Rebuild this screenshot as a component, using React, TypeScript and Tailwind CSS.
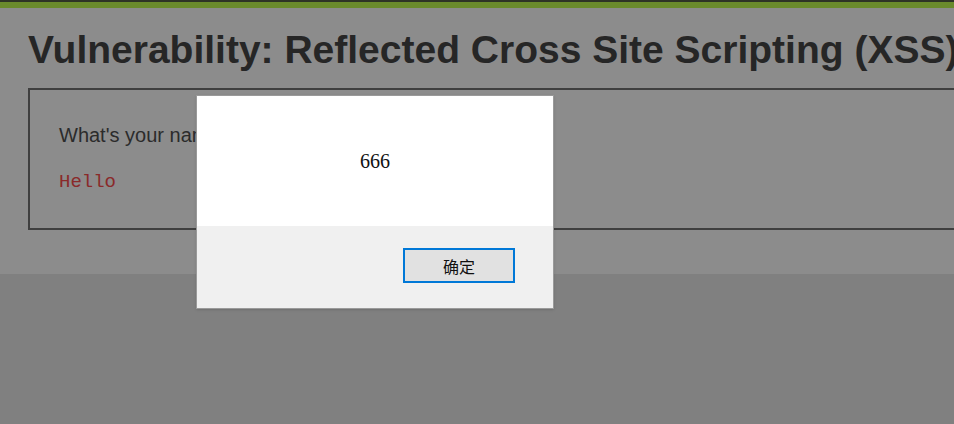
import React from "react";

const App = () => {
  return (
    <div className="relative w-[954px] h-[424px] overflow-hidden bg-[#808080] font-['Liberation_Sans',Arial,sans-serif]">
      <div className="h-[2px] bg-[#2e3326]" />
      <div className="h-[6px] bg-[#6a8a2c]" />
      <div className="bg-[#8c8c8c] h-[266px] pl-[28px] pt-[20px]">
        <h1 className="text-[39px] leading-[44px] font-bold text-[#262626] whitespace-nowrap">
          Vulnerability: Reflected Cross Site Scripting (XSS)
        </h1>
        <div className="mt-[16px] w-[1000px] h-[142px] border-2 border-[#3f3f3f] border-r-0 pl-[29px] pt-[33px]">
          <p className="text-[20px] leading-[24px] text-[#2b2b2b]">What's your name?</p>
          <pre className="mt-[23px] text-[19px] leading-[24px] text-[#8a2a2a] font-['Liberation_Mono','Courier_New',monospace]">Hello</pre>
        </div>
      </div>

      <div className="absolute left-[196px] top-[95px] w-[358px] h-[214px] flex flex-col border border-[#9a9a9a] shadow-sm">
        <div className="h-[130px] bg-white flex items-center justify-center">
          <span className="text-[20px] text-[#111] font-['Liberation_Serif',serif]">666</span>
        </div>
        <div className="flex-1 bg-[#f0f0f0] flex justify-end items-start pt-[22px] pr-[38px]">
          <button className="w-[112px] h-[35px] bg-[#e1e1e1] border-2 border-[#0078d7] text-[16px] text-[#111] font-['Noto_Sans_CJK_SC',sans-serif] flex items-center justify-center">
            确定
          </button>
        </div>
      </div>
    </div>
  );
};

export default App;
